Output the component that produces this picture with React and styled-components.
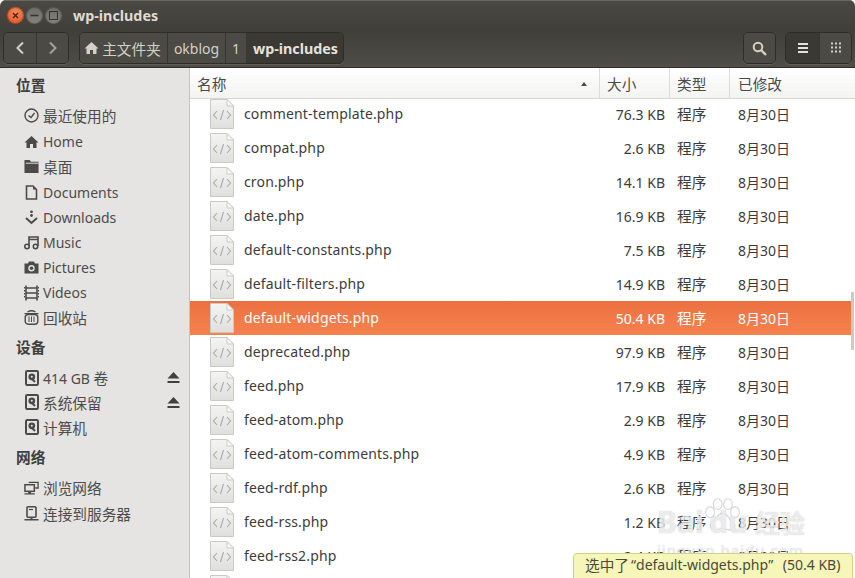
import React from "react";
import styled, { createGlobalStyle } from "styled-components";

const font = `"Noto Sans", "Noto Sans CJK SC", sans-serif`;

const Global = createGlobalStyle`
  html, body { margin: 0; padding: 0; background: #fff; }
  body { font-family: ${font}; overflow: hidden; }
`;

const Window = styled.div`
  position: relative;
  width: 855px;
  height: 578px;
  display: flex;
  flex-direction: column;
  overflow: hidden;
  border-radius: 6px 6px 0 0;
`;

const TitleBar = styled.div`
  height: 30px;
  flex: none;
  display: flex;
  align-items: center;
  padding-left: 7px;
  background: linear-gradient(#4a4943, #403f3a);
  box-shadow: inset 0 1px 0 #6a6862;
`;

const WinBtn = styled.div`
  width: 17px;
  height: 17px;
  margin-right: 2px;
  border-radius: 50%;
  display: flex;
  align-items: center;
  justify-content: center;
  color: ${p => (p.$close ? "#4a1c0c" : "#33322e")};
  background: ${p =>
    p.$close
      ? "radial-gradient(circle at 50% 35%, #f58a5c, #df4a1c)"
      : "linear-gradient(#6c6b65, #85837c)"};
  box-shadow: inset 0 0 0 1px rgba(0, 0, 0, 0.22);
`;

const Title = styled.div`
  margin-left: 9px;
  font-size: 14.3px;
  font-weight: 700;
  color: #dfdbd2;
`;

const Toolbar = styled.div`
  height: 38px;
  flex: none;
  box-sizing: border-box;
  padding: 2px 3px 0;
  display: flex;
  align-items: flex-start;
  background: linear-gradient(#403f3a, #4f4d47);
  border-bottom: 1px solid #2f2e2a;
`;

const Group = styled.div`
  display: flex;
  height: 32px;
  box-sizing: border-box;
  margin-left: ${p => p.$ml || 0}px;
  border: 1px solid #2e2d29;
  border-radius: 5px;
  overflow: hidden;
  box-shadow: 0 1px 0 rgba(255, 255, 255, 0.1);
`;

const ToolBtn = styled.div`
  width: ${p => p.$w}px;
  flex: none;
  box-sizing: border-box;
  padding: 0 ${p => p.$pr || 0}px 0 ${p => p.$pl || 0}px;
  display: flex;
  align-items: center;
  justify-content: center;
  gap: 3px;
  font-size: ${p => (p.$active ? "14.3px" : "14px")};
  font-weight: ${p => (p.$active ? 700 : 400)};
  color: ${p => (p.$active ? "#e6e2d9" : p.$dim ? "#a5a299" : "#d4d0c7")};
  background: ${p => (p.$active ? "#3a3934" : "#4b4a44")};
  border-left: ${p => (p.$sep ? "1px solid #36352f" : "none")};
`;

const Cjk = styled.span`
  font-size: 14.67px;
`;

const Body = styled.div`
  flex: 1;
  display: flex;
  min-height: 0;
`;

const Sidebar = styled.div`
  width: 190px;
  flex: none;
  box-sizing: border-box;
  padding-top: 5px;
  background: #e5e4e2;
  border-right: 1px solid #c4c3bf;
  color: #4c4c4c;
`;

const SideHead = styled.div`
  height: 25px;
  line-height: 25px;
  padding-left: 16px;
  margin-top: ${p => p.$mt || 0}px;
  margin-bottom: 5px;
  font-size: 14.67px;
  font-weight: 700;
  color: #3f3f3f;
`;

const SideItem = styled.div`
  height: ${p => (p.$tall ? 26 : 25)}px;
  display: flex;
  align-items: center;
  padding-left: 24px;
  padding-bottom: ${p => (p.$cjk ? 1 : 0)}px;
  box-sizing: border-box;
  font-size: ${p => (p.$cjk ? "14.67px" : "14px")};
`;

const SideIcon = styled.span`
  width: 15px;
  height: 16px;
  margin-right: 4px;
  display: flex;
  align-items: center;
  justify-content: center;
  color: #4a4a4a;
`;

const Eject = styled.span`
  margin-left: auto;
  margin-right: 9px;
  display: flex;
`;

const Main = styled.div`
  flex: 1;
  min-width: 0;
  position: relative;
  display: flex;
  flex-direction: column;
  background: #fff;
`;

const HeaderRow = styled.div`
  height: 31px;
  flex: none;
  position: relative;
  z-index: 1;
  display: grid;
  grid-template-columns: 410px 70px 60px 1fr;
  background: linear-gradient(#ffffff, #f3f3f2);
  border-bottom: 1px solid #d8d8d5;
  box-sizing: border-box;
`;

const HeadCell = styled.div`
  display: flex;
  align-items: center;
  justify-content: space-between;
  padding: 1px 12px 0 ${p => (p.$last ? 8 : 7)}px;
  font-size: 14.67px;
  color: #4a4a4a;
  border-right: ${p => (p.$last ? "none" : "1px solid #dcdcd9")};
`;

const SortArrow = styled.span`
  width: 0;
  height: 0;
  border-left: 3px solid transparent;
  border-right: 3px solid transparent;
  border-bottom: 4px solid #4a4a4a;
`;

const List = styled.div`
  flex: 1;
  min-height: 0;
  overflow: hidden;
  margin-top: -2px;
  margin-right: 4px;
`;

const Row = styled.div`
  height: 34px;
  display: grid;
  grid-template-columns: 410px 70px 60px 1fr;
  align-items: center;
  font-size: 14px;
  color: ${p => (p.$selected ? "#ffffff" : "#3c3c3c")};
  background: ${p => (p.$selected ? "linear-gradient(#ec7040, #f5824f)" : "transparent")};
`;

const NameCell = styled.div`
  display: flex;
  align-items: center;
  padding-left: 20px;
`;

const FileName = styled.span`
  margin-left: 10px;
  padding-bottom: 2px;
  letter-spacing: 0.15px;
`;

const SizeCell = styled.div`
  text-align: right;
  padding-right: 5px;
`;

const TypeCell = styled.div`
  padding: 0 0 1px 7px;
  font-size: 14.67px;
`;

const DateCell = styled.div`
  padding: 0 0 1px 8px;
`;

const Scroll = styled.div`
  position: absolute;
  right: 1px;
  top: 224px;
  width: 3px;
  height: 58px;
  background: #cbcac6;
`;

const Status = styled.div`
  position: absolute;
  right: 2px;
  bottom: -1px;
  z-index: 2;
  box-sizing: border-box;
  width: 280px;
  height: 26px;
  padding: 0 0 3px 11px;
  display: flex;
  align-items: center;
  white-space: pre;
  font-size: 14px;
  color: #4a4a3c;
  background: #f6f6b9;
  border: 1px solid #d2d283;
  border-radius: 4px 4px 0 0;
`;

const Quote = styled.span`
  margin: 0 ${p => p.$r || 0}px 0 ${p => p.$l || 0}px;
`;

const Watermark = styled.div`
  position: absolute;
  left: 657px;
  top: 497px;
  width: 150px;
  height: 62px;
  z-index: 1;
  color: rgba(255, 255, 255, 0.72);
  text-shadow: 0 0 1px rgba(130, 130, 130, 0.55);
  font-family: "Noto Sans", "Noto Sans CJK SC", sans-serif;
  font-weight: 700;
`;

const Paw = styled.svg`
  position: absolute;
  left: 46px;
  top: 0;
`;

const WmBrand = styled.div`
  position: absolute;
  left: 0;
  top: 4px;
  display: flex;
  font-size: 30px;
  white-space: nowrap;
`;

const WmChunk = styled.span`
  width: ${p => p.$w}px;
`;

const WmCn = styled.span`
  font-size: 25px;
  line-height: 44px;
`;

const WmSite = styled.div`
  position: absolute;
  left: 0;
  top: 43px;
  font-size: 15px;
  font-weight: 400;
  white-space: nowrap;
  letter-spacing: 1px;
`;

const Svg = ({ w = 16, h = 16, children, ...rest }) => (
  <svg width={w} height={h} viewBox={`0 0 ${w} ${h}`} {...rest}>
    {children}
  </svg>
);

const HomeIcon = () => (
  <Svg w={15} h={14}>
    <path d="M7.5 1 L14.5 7.5 L12.5 7.5 L12.5 13 L9 13 L9 9 L6 9 L6 13 L2.5 13 L2.5 7.5 L0.5 7.5 Z" fill="currentColor" />
  </Svg>
);

const ClockIcon = () => (
  <Svg w={15} h={15}>
    <circle cx="7.5" cy="7.5" r="6.5" fill="none" stroke="currentColor" strokeWidth="1.4" />
    <path d="M4.5 7.5 L7 9.5 L10.5 5" fill="none" stroke="currentColor" strokeWidth="1.4" />
  </Svg>
);

const FolderIcon = () => (
  <Svg w={16} h={15}>
    <path d="M0.5 0.5 H6 L7.5 2.5 H15.5 V14.5 H0.5 Z" fill="#4a4a4a" />
    <path d="M2 4 H15.5" stroke="#e5e4e2" strokeWidth="1" />
  </Svg>
);

const DocIcon = () => (
  <Svg w={13} h={15}>
    <path d="M1.5 1 H8 L11.5 4.5 V14 H1.5 Z" fill="none" stroke="currentColor" strokeWidth="1.6" />
    <path d="M8 1 V4.5 H11.5 Z" fill="currentColor" />
  </Svg>
);

const DownloadIcon = () => (
  <Svg w={13} h={15}>
    <circle cx="6.5" cy="1.8" r="1.4" fill="currentColor" />
    <circle cx="6.5" cy="5.5" r="1.4" fill="currentColor" />
    <path d="M1 8 L6.5 13 L12 8" fill="none" stroke="currentColor" strokeWidth="2" />
  </Svg>
);

const MusicIcon = () => (
  <Svg w={15} h={15}>
    <path d="M5 11 V2 H14 V11 M5 4.5 H14" fill="none" stroke="currentColor" strokeWidth="1.6" />
    <circle cx="3" cy="11.5" r="2.2" fill="none" stroke="currentColor" strokeWidth="1.6" />
    <circle cx="11.5" cy="11.5" r="2.2" fill="none" stroke="currentColor" strokeWidth="1.6" />
  </Svg>
);

const CameraIcon = () => (
  <Svg w={15} h={13}>
    <path d="M0.5 2.5 H4 L5 0.5 H10 L11 2.5 H14.5 V12.5 H0.5 Z" fill="currentColor" />
    <circle cx="7.5" cy="7.3" r="3.2" fill="#e5e4e2" />
    <circle cx="7.5" cy="7.3" r="1.8" fill="currentColor" />
  </Svg>
);

const FilmIcon = () => (
  <Svg w={15} h={16}>
    <path d="M2 0.5 V15.5 M13 0.5 V15.5" stroke="currentColor" strokeWidth="1.6" />
    <path d="M2 8 H13 M2 13 H13 M2 3 H13" stroke="currentColor" strokeWidth="1.3" />
    <path d="M0.5 2 V14 M14.5 2 V14" stroke="currentColor" strokeWidth="1" strokeDasharray="1.5 1.5" />
  </Svg>
);

const TrashIcon = () => (
  <Svg w={15} h={15}>
    <path d="M3.5 2 Q7.5 -0.5 11.5 2" fill="none" stroke="currentColor" strokeWidth="1.3" />
    <path d="M0.5 3 H14.5 V4.2 H0.5 Z" fill="currentColor" />
    <rect x="1.2" y="4.5" width="12.6" height="9.7" rx="3" fill="none" stroke="currentColor" strokeWidth="1.4" />
    <path d="M5 6.5 V12 M7.5 6.5 V12 M10 6.5 V12" stroke="currentColor" strokeWidth="1" />
  </Svg>
);

const DiskIcon = () => (
  <Svg w={14} h={16}>
    <rect x="1" y="1" width="12" height="14" rx="1.2" fill="none" stroke="currentColor" strokeWidth="2" />
    <circle cx="6.8" cy="6.8" r="3.4" fill="currentColor" />
    <circle cx="6.8" cy="6.8" r="1" fill="#e5e4e2" />
    <path d="M6.5 8.5 L10 12" stroke="currentColor" strokeWidth="2" />
  </Svg>
);

const NetworkIcon = () => (
  <Svg w={16} h={14}>
    <path d="M5 1 H15 V7 H12 M12 1" fill="none" stroke="currentColor" strokeWidth="1.4" />
    <rect x="1" y="3.5" width="10" height="7" fill="#e5e4e2" stroke="currentColor" strokeWidth="1.6" />
    <path d="M0.5 12.5 H11.5 V14 H0.5 Z M4.5 10.5 H7.5 V12.5 H4.5 Z" fill="currentColor" />
  </Svg>
);

const ServerIcon = () => (
  <Svg w={15} h={15}>
    <rect x="3" y="0.8" width="9" height="10.4" rx="1" fill="none" stroke="currentColor" strokeWidth="1.6" />
    <path d="M5 3.5 H9" stroke="currentColor" strokeWidth="1.2" />
    <path d="M0.5 13 H14.5 V14.5 H0.5 Z M6.5 11 H8.5 V13 H6.5 Z" fill="currentColor" />
  </Svg>
);

const EjectIcon = () => (
  <Svg w={13} h={13}>
    <path d="M6.5 1 L12.5 7.5 H0.5 Z" fill="#3f3f3f" />
    <path d="M0.5 10 H12.5 V12 H0.5 Z" fill="#3f3f3f" />
  </Svg>
);

const FileIcon = () => (
  <Svg w={24} h={30}>
    <defs>
      <linearGradient id="sheet" x1="0" y1="0" x2="0" y2="1">
        <stop offset="0" stopColor="#f4f4f2" />
        <stop offset="1" stopColor="#dfdfdc" />
      </linearGradient>
    </defs>
    <path d="M0.5 0.5 H17 L23.5 7 V29.5 H0.5 Z" fill="url(#sheet)" stroke="#c9c9c6" />
    <path d="M17 0.5 V7 H23.5 Z" fill="#fbfbfa" stroke="#c9c9c6" />
    <path d="M7 12 L3.5 16 L7 20 M17 12 L20.5 16 L17 20 M13.5 11 L10.5 21" fill="none" stroke="#a9a9a6" strokeWidth="1.1" />
  </Svg>
);

const places = [
  ["最近使用的", ClockIcon, true],
  ["Home", HomeIcon],
  ["桌面", FolderIcon, true],
  ["Documents", DocIcon],
  ["Downloads", DownloadIcon],
  ["Music", MusicIcon],
  ["Pictures", CameraIcon],
  ["Videos", FilmIcon],
  ["回收站", TrashIcon, true],
];

const files = [
  ["comment-template.php", "76.3 KB"],
  ["compat.php", "2.6 KB"],
  ["cron.php", "14.1 KB"],
  ["date.php", "16.9 KB"],
  ["default-constants.php", "7.5 KB"],
  ["default-filters.php", "14.9 KB"],
  ["default-widgets.php", "50.4 KB"],
  ["deprecated.php", "97.9 KB"],
  ["feed.php", "17.9 KB"],
  ["feed-atom.php", "2.9 KB"],
  ["feed-atom-comments.php", "4.9 KB"],
  ["feed-rdf.php", "2.6 KB"],
  ["feed-rss.php", "1.2 KB"],
  ["feed-rss2.php", "2.4 KB"],
  ["feed-rss2-comments.php", "1.5 KB"],
];

const App = () => (
  <Window>
    <Global />
    <TitleBar>
      <WinBtn $close>
        <Svg w={7} h={7}>
          <path d="M1 1 L6 6 M6 1 L1 6" stroke="currentColor" strokeWidth="1.3" />
        </Svg>
      </WinBtn>
      <WinBtn>
        <Svg w={9} h={7}>
          <path d="M0.5 3.5 H8.5" stroke="currentColor" strokeWidth="1.4" />
        </Svg>
      </WinBtn>
      <WinBtn>
        <Svg w={9} h={9}>
          <rect x="0.5" y="0.5" width="8" height="8" fill="none" stroke="currentColor" />
        </Svg>
      </WinBtn>
      <Title>wp-includes</Title>
    </TitleBar>
    <Toolbar>
      <Group>
        <ToolBtn $w={32}>
          <Svg w={10} h={14}>
            <path d="M8 1.5 L2.5 7 L8 12.5" fill="none" stroke="currentColor" strokeWidth="2" />
          </Svg>
        </ToolBtn>
        <ToolBtn $w={32} $sep $dim>
          <Svg w={10} h={14}>
            <path d="M2 1.5 L7.5 7 L2 12.5" fill="none" stroke="currentColor" strokeWidth="2" />
          </Svg>
        </ToolBtn>
      </Group>
      <Group $ml={10}>
        <ToolBtn $w={87} $pr={2}>
          <HomeIcon />
          <Cjk>主文件夹</Cjk>
        </ToolBtn>
        <ToolBtn $w={58} $sep>okblog</ToolBtn>
        <ToolBtn $w={21} $sep>1</ToolBtn>
        <ToolBtn $w={97} $pl={2} $active>wp-includes</ToolBtn>
      </Group>
      <Group $ml={399}>
        <ToolBtn $w={31}>
          <Svg w={15} h={15}>
            <circle cx="6" cy="6" r="4.3" fill="none" stroke="currentColor" strokeWidth="2" />
            <path d="M9.5 9.5 L14 14" stroke="currentColor" strokeWidth="2.4" />
          </Svg>
        </ToolBtn>
      </Group>
      <Group $ml={9}>
        <ToolBtn $w={33} $active>
          <Svg w={12} h={12}>
            <path d="M1 2 H11 M1 6 H11 M1 10 H11" stroke="currentColor" strokeWidth="2" />
          </Svg>
        </ToolBtn>
        <ToolBtn $w={32} $sep>
          <Svg w={12} h={12}>
            <path d="M1 1.5 H11 M1 5.5 H11 M1 9.5 H11" stroke="currentColor" strokeWidth="2" strokeDasharray="2 2" />
          </Svg>
        </ToolBtn>
      </Group>
    </Toolbar>
    <Body>
      <Sidebar>
        <SideHead>位置</SideHead>
        {places.map(([label, Icon, cjk]) => (
          <SideItem key={label} $cjk={cjk} $tall={cjk}>
            <SideIcon><Icon /></SideIcon>
            {label}
          </SideItem>
        ))}
        <SideHead $mt={4}>设备</SideHead>
        <SideItem>
          <SideIcon><DiskIcon /></SideIcon>
          <span>414 GB <Cjk>卷</Cjk></span>
          <Eject><EjectIcon /></Eject>
        </SideItem>
        <SideItem $cjk>
          <SideIcon><DiskIcon /></SideIcon>
          系统保留
          <Eject><EjectIcon /></Eject>
        </SideItem>
        <SideItem $cjk>
          <SideIcon><DiskIcon /></SideIcon>
          计算机
        </SideItem>
        <SideHead $mt={5}>网络</SideHead>
        <SideItem $cjk $tall>
          <SideIcon><NetworkIcon /></SideIcon>
          浏览网络
        </SideItem>
        <SideItem $cjk>
          <SideIcon><ServerIcon /></SideIcon>
          连接到服务器
        </SideItem>
      </Sidebar>
      <Main>
        <HeaderRow>
          <HeadCell>
            名称
            <SortArrow />
          </HeadCell>
          <HeadCell>大小</HeadCell>
          <HeadCell>类型</HeadCell>
          <HeadCell $last>已修改</HeadCell>
        </HeaderRow>
        <List>
          {files.map(([name, size]) => (
            <Row key={name} $selected={name === "default-widgets.php"}>
              <NameCell>
                <FileIcon />
                <FileName>{name}</FileName>
              </NameCell>
              <SizeCell>{size}</SizeCell>
              <TypeCell>程序</TypeCell>
              <DateCell>8月30日</DateCell>
            </Row>
          ))}
        </List>
        <Scroll />
      </Main>
    </Body>
    <Status>
      <Cjk>选中了</Cjk>
      <Quote $l={2}>“</Quote>
      default-widgets.php
      <Quote $r={6}>”</Quote>
      {" (50.4 KB)"}
    </Status>
    <Watermark>
      <Paw width="38" height="36" viewBox="0 0 70 62" fill="rgba(255,255,255,0.8)" stroke="rgba(150,150,150,0.4)" strokeWidth="2">
        <ellipse cx="13" cy="26" rx="8" ry="10" />
        <ellipse cx="27" cy="11" rx="8" ry="10" />
        <ellipse cx="46" cy="11" rx="8" ry="10" />
        <ellipse cx="59" cy="26" rx="8" ry="10" />
        <path d="M36 28 C26 28 24 40 16 46 C10 52 16 60 26 58 C32 56 40 56 46 58 C56 60 62 52 56 46 C48 40 46 28 36 28 Z" />
      </Paw>
      <WmBrand>
        <WmChunk $w={52}>Bai</WmChunk>
        <WmChunk $w={46}>du</WmChunk>
        <WmCn>经验</WmCn>
      </WmBrand>
      <WmSite>jingyan.baidu.com</WmSite>
    </Watermark>
  </Window>
);

export default App;
